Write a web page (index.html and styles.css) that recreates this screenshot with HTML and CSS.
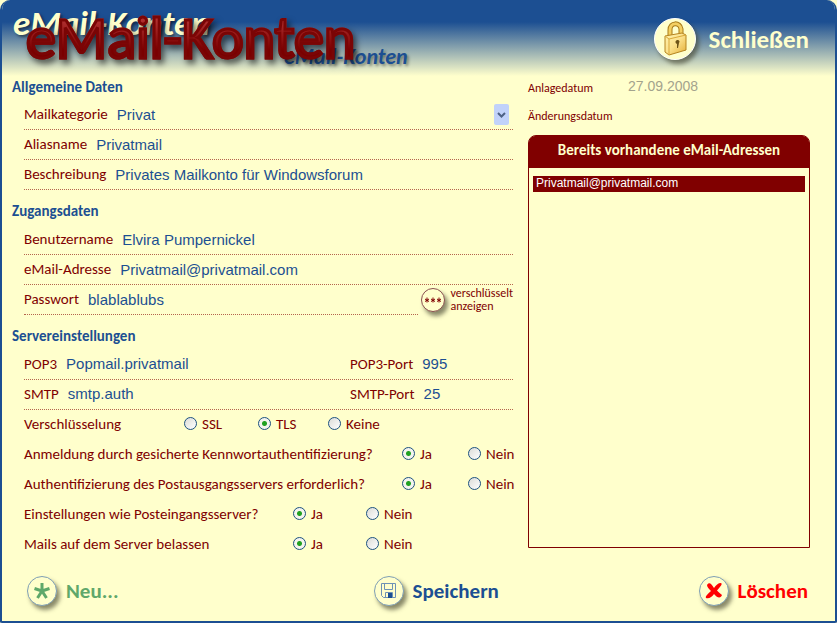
FILE: index.html
```
<!DOCTYPE html>
<html lang="de">
<head>
  <meta charset="UTF-8">
  <meta name="viewport" content="width=device-width, initial-scale=1.0">
  <title>eMail-Konten</title>
  <link rel="stylesheet" href="styles.css">
</head>
<body>
<form class="window">
  <header class="header">
    <span class="deco deco-top" aria-hidden="true">eMail-Konten</span>
    <span class="deco deco-bottom" aria-hidden="true">eMail-Konten</span>
    <h1>eMail-Konten</h1>
    <button type="button" class="btn btn-close">
      <span class="round round-big">
        <svg width="30" height="38" viewBox="0 0 30 38">
          <defs>
            <linearGradient id="gold" x1="0" y1="0" x2="1" y2="1">
              <stop offset="0" stop-color="#fff3b0"/>
              <stop offset="0.5" stop-color="#fbe08a"/>
              <stop offset="1" stop-color="#e3ae35"/>
            </linearGradient>
          </defs>
          <path d="M10 18V10C10 2 20 2 21 9V16" fill="none" stroke="#a87b18" stroke-width="5"/>
          <path d="M10 18V10C10 2 20 2 21 9V16" fill="none" stroke="#f3cf62" stroke-width="3"/>
          <path d="M5 16L22 13L26 15V30L9 35L5 32Z" fill="url(#gold)" stroke="#b58420"/>
          <path d="M5 16L9 19L26 15M9 19V35" fill="none" stroke="#d9a93a"/>
          <path d="M18 20a2 2 0 0 1 1 3l-1 5h-1l0-4a2 2 0 0 1 1-4z" fill="#6d5418"/>
        </svg>
      </span>
      Schließen
    </button>
  </header>

  <main class="content">
    <div class="left">
      <h2>Allgemeine Daten</h2>
      <div class="row line">
        <label for="kategorie">Mailkategorie</label>
        <div class="dropdown">
          <select id="kategorie"><option>Privat</option></select>
          <svg class="arrow" width="15" height="21" viewBox="0 0 15 21">
            <rect width="15" height="21" rx="2" fill="#c1d2fa"/>
            <path d="M4 9L7.500 12.500L11 9" fill="none" stroke="#4d6185" stroke-width="2"/>
          </svg>
        </div>
      </div>
      <div class="row line">
        <label for="alias">Aliasname</label>
        <input type="text" id="alias" value="Privatmail">
      </div>
      <div class="row line">
        <label for="beschreibung">Beschreibung</label>
        <input type="text" id="beschreibung" value="Privates Mailkonto für Windowsforum">
      </div>

      <h2>Zugangsdaten</h2>
      <div class="row line">
        <label for="benutzer">Benutzername</label>
        <input type="text" id="benutzer" value="Elvira Pumpernickel">
      </div>
      <div class="row line">
        <label for="email">eMail-Adresse</label>
        <input type="text" id="email" value="Privatmail@privatmail.com">
      </div>
      <div class="password">
        <div class="row line">
          <label for="passwort">Passwort</label>
          <input type="text" id="passwort" value="blablablubs">
        </div>
        <button type="button" class="btn btn-show">
          <span class="round round-small">
            <svg width="18" height="6" viewBox="0 0 18 6">
              <path d="M3 0.500V5.500M1 2L5 4.500M5 2L1 4.500M9 0.500V5.500M7 2L11 4.500M11 2L7 4.500M15 0.500V5.500M13 2L17 4.500M17 2L13 4.500" stroke="#800000"/>
            </svg>
          </span>
          <span>verschlüsselt<br>anzeigen</span>
        </button>
      </div>

      <h2>Servereinstellungen</h2>
      <div class="server line">
        <div class="row">
          <label for="pop">POP3</label>
          <input type="text" id="pop" value="Popmail.privatmail">
        </div>
        <div class="row">
          <label for="popport">POP3-Port</label>
          <input type="text" id="popport" value="995">
        </div>
      </div>
      <div class="server line">
        <div class="row">
          <label for="smtp">SMTP</label>
          <input type="text" id="smtp" value="smtp.auth">
        </div>
        <div class="row">
          <label for="smtpport">SMTP-Port</label>
          <input type="text" id="smtpport" value="25">
        </div>
      </div>

      <div class="choice choice-three" role="radiogroup" aria-labelledby="q1">
        <span id="q1">Verschlüsselung</span>
        <label><input type="radio" name="krypt">SSL</label>
        <label><input type="radio" name="krypt" checked>TLS</label>
        <label><input type="radio" name="krypt">Keine</label>
      </div>
      <div class="choice choice-wide" role="radiogroup" aria-labelledby="q2">
        <span id="q2">Anmeldung durch gesicherte Kennwortauthentifizierung?</span>
        <label><input type="radio" name="anmeldung" checked>Ja</label>
        <label><input type="radio" name="anmeldung">Nein</label>
      </div>
      <div class="choice choice-wide" role="radiogroup" aria-labelledby="q3">
        <span id="q3">Authentifizierung des Postausgangsservers erforderlich?</span>
        <label><input type="radio" name="ausgang" checked>Ja</label>
        <label><input type="radio" name="ausgang">Nein</label>
      </div>
      <div class="choice" role="radiogroup" aria-labelledby="q4">
        <span id="q4">Einstellungen wie Posteingangsserver?</span>
        <label><input type="radio" name="eingang" checked>Ja</label>
        <label><input type="radio" name="eingang">Nein</label>
      </div>
      <div class="choice" role="radiogroup" aria-labelledby="q5">
        <span id="q5">Mails auf dem Server belassen</span>
        <label><input type="radio" name="belassen" checked>Ja</label>
        <label><input type="radio" name="belassen">Nein</label>
      </div>
    </div>

    <div class="right">
      <dl class="dates">
        <dt>Anlagedatum</dt>
        <dd>27.09.2008</dd>
        <dt>Änderungsdatum</dt>
        <dd></dd>
      </dl>
      <div class="panel">
        <label class="panel-title" for="adressen">Bereits vorhandene eMail-Adressen</label>
        <select id="adressen" class="list" size="2">
          <option selected>Privatmail@privatmail.com</option>
        </select>
      </div>
    </div>
  </main>

  <footer class="footer">
    <button type="button" class="btn btn-new">
      <span class="round">
        <svg width="18" height="18" viewBox="0 0 18 18">
          <path d="M9 9V1M9 9L1.500 6.500M9 9L16.500 6.500M9 9L4.500 16M9 9L13.500 16" stroke="#5fa86a" stroke-width="3"/>
        </svg>
      </span>
      Neu...
    </button>
    <button type="submit" class="btn btn-save">
      <span class="round">
        <svg width="17" height="17" viewBox="0 0 17 17">
          <path d="M1.500 1.500H15.500V15.500H3.500L1.500 13.500Z" fill="none" stroke="#6e92b5"/>
          <path d="M4.500 1.500V7.500H12.500V1.500M5.500 15.500V10.500H12.500V15.500" fill="none" stroke="#6e92b5"/>
          <rect x="8" y="11" width="4" height="5" fill="#1c4f92"/>
        </svg>
      </span>
      Speichern
    </button>
    <button type="button" class="btn btn-delete">
      <span class="round">
        <svg width="18" height="18" viewBox="0 0 18 18">
          <path d="M2 3C4 0 6 1 9 6C11 3 13 1 16 1C18 2 15 5 12 8.500C14 11 16 12 17 13C16 16 13 17 9 12C7 15 4 17 1 16C0 14 3 12 6 9C4 7 2 5 2 3Z" fill="#f00"/>
        </svg>
      </span>
      Löschen
    </button>
  </footer>
</form>
</body>
</html>
```

FILE: styles.css
```
* {
  box-sizing: border-box;
}
body {
  margin: 0;
  background: #ffffcc;
  color: #800000;
  font-family: Carlito, Lato, sans-serif;
  font-size: 15px;
}
.window {
  display: flex;
  flex-direction: column;
  min-height: 100vh;
  border: 2px solid #1c4f92;
  border-top: 0;
  border-radius: 10px 10px 2px 2px;
  background: #ffffcc;
  overflow: hidden;
}

/* header */
.header {
  position: relative;
  display: flex;
  justify-content: flex-end;
  align-items: center;
  height: 78px;
  padding-right: 26px;
  background: linear-gradient(#1c4f92 22px, #ffffcc 76px);
}
h1, .deco {
  position: absolute;
  margin: 0;
  line-height: 1;
  white-space: nowrap;
}
h1 {
  left: 24px;
  top: 8px;
  font-size: 60px;
  font-weight: 500;
  background: linear-gradient(#b03030 20%, #7a0000 70%);
  background-clip: text;
  -webkit-text-fill-color: transparent;
  -webkit-text-stroke: 3px #7a0505;
  filter: drop-shadow(3px 4px 3px rgba(0, 0, 0, 0.6));
}
.deco {
  font-style: italic;
  font-weight: 900;
}
.deco-top {
  left: 11px;
  top: 6px;
  font-size: 35px;
  color: #ffffcc;
  text-shadow: 2px 2px 3px rgba(0, 0, 0, 0.5);
}
.deco-bottom {
  left: 282px;
  top: 46px;
  font-size: 22px;
  color: #1c4f92;
  text-shadow: 2px 2px 3px rgba(0, 0, 0, 0.4);
}

/* buttons */
.btn {
  display: flex;
  align-items: center;
  gap: 9px;
  padding: 0;
  border: 0;
  background: none;
  font-family: inherit;
  font-size: 21px;
  font-weight: bold;
  cursor: pointer;
}
.round {
  display: flex;
  flex: none;
  align-items: center;
  justify-content: center;
  width: 30px;
  height: 30px;
  border: 1px solid #7f9fb5;
  border-radius: 50%;
  background: #ffffcc;
  box-shadow: 3px 4px 4px rgba(60, 60, 40, 0.6);
}
.round-big {
  width: 42px;
  height: 42px;
  border-color: #fff;
}
.round-small {
  width: 24px;
  height: 24px;
  border-color: #8a5050;
}
.btn-close {
  gap: 13px;
  font-size: 25px;
  color: #ffffcc;
}
.btn-show {
  gap: 5px;
  color: #800000;
  font-size: 12px;
  font-weight: normal;
  line-height: 13px;
  text-align: left;
}
.btn-new {
  color: #5fa86a;
}
.btn-save {
  color: #1c4f92;
}
.btn-delete {
  color: #f00;
}

/* content */
.content {
  display: grid;
  grid-template-columns: minmax(0, 1fr) 282px;
  gap: 15px;
  padding: 0 25px 0 10px;
}
h2 {
  margin: 0;
  color: #1c4f92;
  font-size: 15px;
  line-height: 18px;
  padding: 12px 0 5px;
}
h2:first-child {
  padding-top: 0;
  padding-bottom: 4px;
}
.row {
  display: flex;
  align-items: center;
  gap: 9px;
  height: 30px;
  padding-bottom: 1px;
}
.left > .row, .password, .server, .choice {
  margin-left: 12px;
}
.line {
  border-bottom: 1px dotted #b5654d;
}
input[type="text"], select {
  flex: 1;
  min-width: 0;
  width: 100%;
  padding: 0;
  border: 0;
  outline: 0;
  background: none;
  color: #1c4f92;
  font-family: "Liberation Sans", Arial, sans-serif;
  font-size: 15px;
}
.dropdown {
  position: relative;
  display: flex;
  flex: 1;
}
.dropdown select {
  appearance: none;
}
.arrow {
  position: absolute;
  top: -2px;
  right: 4px;
  pointer-events: none;
}
.password {
  display: flex;
  align-items: center;
  gap: 3px;
}
.password .row {
  flex: 1;
}
.server {
  display: grid;
  grid-template-columns: 2fr 1fr;
  height: 30px;
}
.server .row {
  height: 28px;
}

/* radio rows */
.choice {
  display: grid;
  grid-template-columns: 1fr 73px 147px;
  align-items: center;
  height: 30px;
  padding-bottom: 3px;
  white-space: nowrap;
}
.choice-wide {
  grid-template-columns: 1fr 66px 45px;
}
.choice-three {
  grid-template-columns: 160px 74px 70px 1fr;
}
.choice label {
  display: flex;
  align-items: center;
  gap: 5px;
}
input[type="radio"] {
  appearance: none;
  flex: none;
  width: 13px;
  height: 13px;
  margin: 0;
  border: 1px solid #1c5180;
  border-radius: 50%;
  background: linear-gradient(135deg, #dcdcd7, #fff);
}
input[type="radio"]:checked {
  background: radial-gradient(circle, #21a121 2px, #f4f4ee 3px);
}

/* right side */
.right {
  display: flex;
  flex-direction: column;
  padding-bottom: 12px;
}
.dates {
  display: grid;
  grid-template-columns: 100px 1fr;
  grid-auto-rows: 28px;
  margin: 0 0 1px;
  font-size: 12px;
  line-height: 20px;
}
.dates dd {
  margin: 0;
  color: #a3a38c;
  font-family: "Liberation Sans", Arial, sans-serif;
  font-size: 14px;
  line-height: 16px;
}
.panel {
  display: flex;
  flex: 1;
  flex-direction: column;
  border: 1px solid #800000;
  border-radius: 8px 8px 0 0;
}
.panel-title {
  padding: 5px 0 8px;
  background: #800000;
  border-radius: 6px 6px 0 0;
  color: #ffffcc;
  font-weight: bold;
  line-height: 19px;
  text-align: center;
}
.list {
  padding: 8px 4px;
  font-size: 12px;
}
.list option {
  padding: 0 3px;
  min-height: 16px;
  line-height: 16px;
}
.list option:checked {
  background: linear-gradient(#800000, #800000);
  color: #fff;
  -webkit-text-fill-color: #fff;
}

/* footer */
.footer {
  display: grid;
  grid-template-columns: 16fr 15fr 5fr;
  flex: 1;
  align-items: center;
  padding: 0 27px 0 25px;
}
```
